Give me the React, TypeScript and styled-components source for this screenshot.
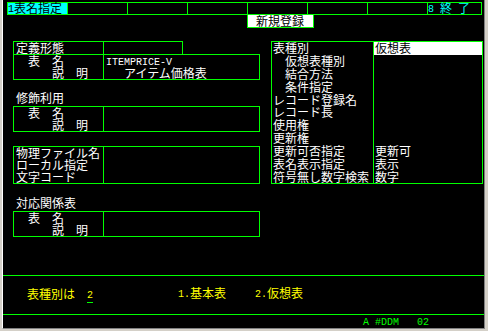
import React from 'react';
import styled, { createGlobalStyle } from 'styled-components';

const GREEN = '#00ff00';
const CYAN = '#00ffff';
const YELLOW = '#ffff00';

const GlobalStyle = createGlobalStyle`
  html, body {
    margin: 0;
    padding: 0;
    background: #d4d0c8;
  }
  body {
    font-family: "Noto Sans CJK JP", "DejaVu Sans", sans-serif;
  }
`;

const Frame = styled.div`
  width: 488px;
  height: 331px;
  box-sizing: border-box;
  padding: 0 3px 2px 2px;
  background: #d4d0c8;
`;

const Screen = styled.div`
  height: 329px;
  box-sizing: border-box;
  background: #000;
  border-left: 1px solid #ffffff;
  border-right: 1px solid #808080;
  border-bottom: 1px solid #808080;
  display: flex;
  flex-direction: column;
  color: #ffffff;
  font-size: 12px;
  line-height: 12px;
`;

// 半角文字（6px 幅）
const Ascii = styled.span`
  font-family: "Liberation Mono", "DejaVu Sans Mono", monospace;
  font-size: 10px;
  white-space: pre;
  vertical-align: 1px;
`;

// 上部ファンクションバー
const TopBar = styled.div`
  margin: 2px 0 0 4px;
  width: 475px;
  height: 13px;
  box-sizing: border-box;
  border: 1px solid ${GREEN};
  display: flex;
`;

const BarCell = styled.div<{ $bg?: string; $fg?: string; $last?: boolean }>`
  flex: ${({ $last }) => ($last ? '1' : '0 0 60px')};
  box-sizing: border-box;
  border-right: ${({ $last }) => ($last ? 'none' : `1px solid ${GREEN}`)};
  background: ${({ $bg }) => $bg || 'transparent'};
  color: ${({ $fg }) => $fg || '#fff'};
  line-height: 10px;
  white-space: pre;
`;

const ModeBox = styled.div`
  margin: -1px 0 0 244px;
  width: 67px;
  height: 14px;
  box-sizing: border-box;
  border: 1px solid ${GREEN};
  background: #fff;
  color: #000;
  padding-left: 8px;
  line-height: 11px;
`;

const Main = styled.div`
  display: flex;
  align-items: flex-start;
  margin-top: 13px;
`;

const LeftCol = styled.div`
  margin-left: 10px;
  width: 247px;
  display: flex;
  flex-direction: column;
`;

const Box = styled.div<{ $w?: number; $h: number; $mt?: number }>`
  width: ${({ $w }) => $w || 247}px;
  height: ${({ $h }) => $h}px;
  margin-top: ${({ $mt }) => $mt || 0}px;
  box-sizing: border-box;
  border: 1px solid ${GREEN};
  display: grid;
  grid-template-columns: 90px 1fr;
  grid-auto-rows: 12px;
`;

const Label = styled.div`
  box-sizing: border-box;
  border-right: 1px solid ${GREEN};
  padding-left: 2px;
  line-height: 11px;
  white-space: pre;
`;

const Value = styled.div`
  padding-left: 2px;
  line-height: 11px;
  white-space: pre;
`;

const SectionTitle = styled.div<{ $mt: number }>`
  margin-top: ${({ $mt }) => $mt}px;
  margin-bottom: 1px;
  padding-left: 3px;
  height: 13px;
  line-height: 12px;
`;

const RightPanel = styled.div`
  margin-left: 11px;
  width: 212px;
  height: 143px;
  box-sizing: border-box;
  border: 1px solid ${GREEN};
  display: grid;
  grid-template-columns: 102px 1fr;
  grid-template-rows: repeat(11, 1fr);
`;

const PanelLabel = styled.div<{ $indent?: boolean }>`
  box-sizing: border-box;
  border-right: 1px solid ${GREEN};
  padding-left: ${({ $indent }) => ($indent ? 13 : 1)}px;
  display: flex;
  align-items: center;
  white-space: pre;
`;

const PanelValue = styled.div<{ $hi?: boolean }>`
  padding-left: 1px;
  display: flex;
  align-items: center;
  background: ${({ $hi }) => ($hi ? '#fff' : 'transparent')};
  color: ${({ $hi }) => ($hi ? '#000' : '#fff')};
`;

const Bottom = styled.div`
  margin-top: auto;
  display: flex;
  flex-direction: column;
`;

const Rule = styled.div`
  height: 1px;
  background: ${GREEN};
`;

const Prompt = styled.div`
  height: 38px;
  box-sizing: border-box;
  padding: 0 0 2px 24px;
  display: flex;
  align-items: center;
  color: ${YELLOW};
`;

const PromptItem = styled.span<{ $ml?: number }>`
  margin-left: ${({ $ml }) => $ml || 0}px;
  line-height: 12px;
`;

const Field = styled.span`
  display: inline-block;
  margin: 0 0 -2px 12px;
  width: 6px;
  line-height: 12px;
  border-bottom: 1px solid ${GREEN};
`;

const Status = styled.div`
  height: 13px;
  line-height: 12px;
  padding-left: 360px;
  color: ${GREEN};
`;

const rightRows: { label: string; value?: string; indent?: boolean; hi?: boolean }[] = [
  { label: '表種別', value: '仮想表', hi: true },
  { label: '仮想表種別', indent: true },
  { label: '結合方法', indent: true },
  { label: '条件指定', indent: true },
  { label: 'レコード登録名' },
  { label: 'レコード長' },
  { label: '使用権' },
  { label: '更新権' },
  { label: '更新可否指定', value: '更新可' },
  { label: '表名表示指定', value: '表示' },
  { label: '符号無し数字検索', value: '数字' },
];

const NameDesc: React.FC<{ name?: React.ReactNode; desc?: React.ReactNode }> = ({ name, desc }) => (
  <>
    <Label>{'　表　名'}</Label>
    <Value>{name}</Value>
    <Label>{'　　　説　明'}</Label>
    <Value>{desc}</Value>
  </>
);

const App: React.FC = () => {
  return (
    <Frame>
      <GlobalStyle />
      <Screen>
        <TopBar>
          <BarCell $bg={CYAN} $fg="#000">
            <Ascii>1</Ascii>表名指定
          </BarCell>
          <BarCell />
          <BarCell />
          <BarCell />
          <BarCell />
          <BarCell />
          <BarCell />
          <BarCell $fg={CYAN} $last>
            <Ascii>8 </Ascii>終<Ascii> </Ascii>了
          </BarCell>
        </TopBar>
        <ModeBox>新規登録</ModeBox>

        <Main>
          <LeftCol>
            <Box $w={170} $h={14}>
              <Label>定義形態</Label>
              <Value />
            </Box>
            <Box $h={26} $mt={-1}>
              <NameDesc
                name={<Ascii>ITEMPRICE-V</Ascii>}
                desc={
                  <>
                    <Ascii>{'   '}</Ascii>アイテム価格表
                  </>
                }
              />
            </Box>

            <SectionTitle $mt={12}>修飾利用</SectionTitle>
            <Box $h={26}>
              <NameDesc />
            </Box>

            <Box $h={38} $mt={14}>
              <Label>物理ファイル名</Label>
              <Value />
              <Label>ローカル指定</Label>
              <Value />
              <Label>文字コード</Label>
              <Value />
            </Box>

            <SectionTitle $mt={13}>対応関係表</SectionTitle>
            <Box $h={26}>
              <NameDesc />
            </Box>
          </LeftCol>

          <RightPanel>
            {rightRows.map((r) => (
              <React.Fragment key={r.label}>
                <PanelLabel $indent={r.indent}>{r.label}</PanelLabel>
                <PanelValue $hi={r.hi}>{r.value}</PanelValue>
              </React.Fragment>
            ))}
          </RightPanel>
        </Main>

        <Bottom>
          <Rule />
          <Prompt>
            <PromptItem>表種別は</PromptItem>
            <Field>
              <Ascii>2</Ascii>
            </Field>
            <PromptItem $ml={85}>
              <Ascii>1.</Ascii>基本表
            </PromptItem>
            <PromptItem $ml={29}>
              <Ascii>2.</Ascii>仮想表
            </PromptItem>
          </Prompt>
          <Rule />
          <Status>
            <Ascii>{'A #DDM   02'}</Ascii>
          </Status>
        </Bottom>
      </Screen>
    </Frame>
  );
};

export default App;
